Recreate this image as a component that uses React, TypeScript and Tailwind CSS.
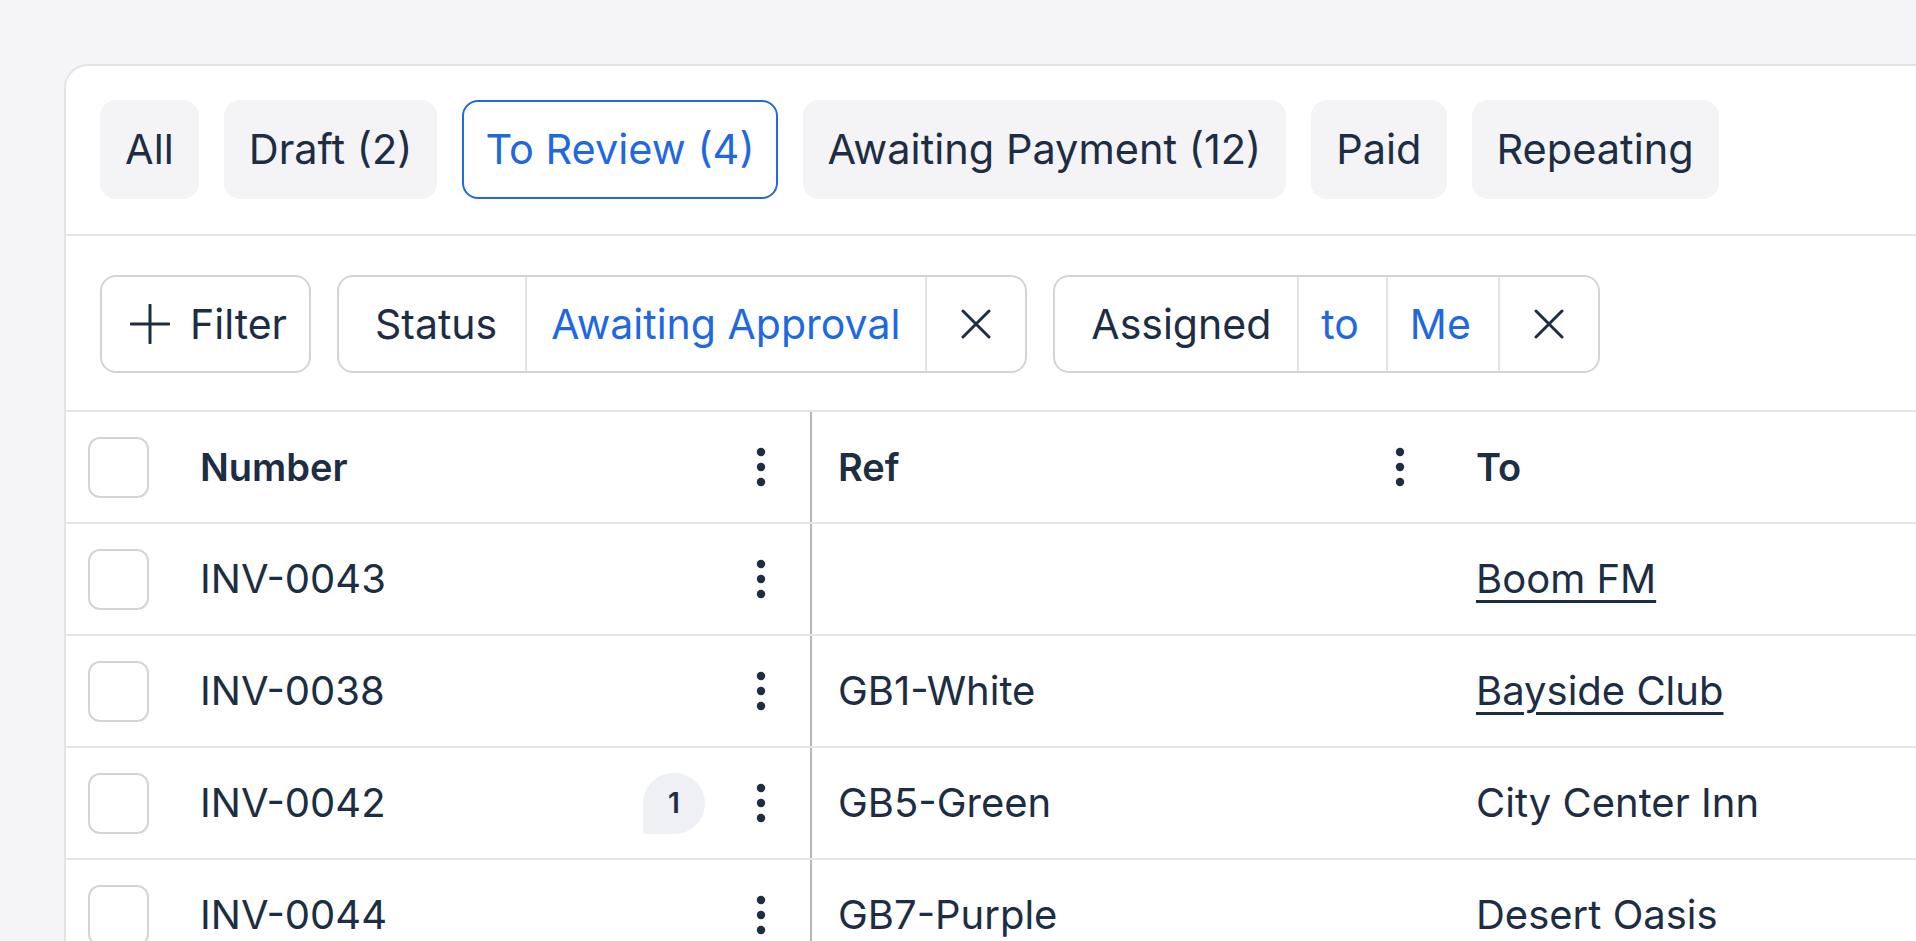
import React from 'react';

const tabs = [
  { label: 'All' },
  { label: 'Draft (2)' },
  { label: 'To Review (4)', active: true },
  { label: 'Awaiting Payment (12)' },
  { label: 'Paid' },
  { label: 'Repeating' },
];

const rows = [
  { number: 'INV-0043', ref: '', to: 'Boom FM', link: true },
  { number: 'INV-0038', ref: 'GB1-White', to: 'Bayside Club', link: true },
  { number: 'INV-0042', ref: 'GB5-Green', to: 'City Center Inn', badge: 1 },
  { number: 'INV-0044', ref: 'GB7-Purple', to: 'Desert Oasis' },
];

function Dots() {
  return (
    <svg width="24" height="40" viewBox="0 0 24 40" className="shrink-0 text-[#1d2d44]">
      <circle cx="12" cy="5" r="4.2" fill="currentColor" />
      <circle cx="12" cy="20" r="4.2" fill="currentColor" />
      <circle cx="12" cy="35" r="4.2" fill="currentColor" />
    </svg>
  );
}

function Cross() {
  return (
    <svg width="30" height="30" viewBox="0 0 30 30" className="text-[#1d2d44]">
      <path d="M2 2 L28 28 M28 2 L2 28" stroke="currentColor" strokeWidth="3" strokeLinecap="round" />
    </svg>
  );
}

function Checkbox() {
  return <div className="w-[61px] h-[61px] shrink-0 rounded-[12px] border-2 border-[#d4d4d8] bg-white" />;
}

export default function App() {
  return (
    <div className="h-[941px] overflow-hidden bg-[#f5f5f7] pt-[64px] pl-[64px] font-[Inter,sans-serif] text-[40px] leading-none text-[#1d2d44]">
      <div className="h-[1000px] bg-white border-l-2 border-t-2 border-[#e4e4e7] rounded-tl-[24px]">
        {/* Status tabs */}
        <div className="flex items-center gap-[25px] pl-[34px] pt-[34px] pb-[35px] border-b-2 border-[#e4e4e7] text-[41.5px]">
          {tabs.map((t) =>
            t.active ? (
              <div
                key={t.label}
                className="h-[99px] px-[21px] flex items-center rounded-[16px] border-2 border-[#2469de] bg-white text-[#1f69e0] whitespace-nowrap"
              >
                {t.label}
              </div>
            ) : (
              <div
                key={t.label}
                className="h-[99px] px-[25px] flex items-center rounded-[16px] bg-[#f4f4f6] whitespace-nowrap"
              >
                {t.label}
              </div>
            )
          )}
        </div>

        {/* Filters */}
        <div className="flex items-center gap-[26px] pl-[34px] pt-[39px] pb-[37px] border-b-2 border-[#e4e4e7] text-[41px]">
          <div className="h-[98px] flex items-center gap-[20px] pl-[28px] pr-[22px] rounded-[16px] border-2 border-[#d4d4d8]">
            <svg width="40" height="40" viewBox="0 0 40 40" className="text-[#1d2d44]">
              <path d="M20 1 V39 M1 20 H39" stroke="currentColor" strokeWidth="3" strokeLinecap="round" />
            </svg>
            <span>Filter</span>
          </div>

          <div className="h-[98px] flex items-stretch rounded-[16px] border-2 border-[#d4d4d8] whitespace-nowrap">
            <div className="flex items-center pl-[36px] pr-[28px] border-r-2 border-[#e4e4e7]">Status</div>
            <div className="flex items-center pl-[24px] pr-[25px] border-r-2 border-[#e4e4e7] text-[#1f69e0]">
              Awaiting Approval
            </div>
            <div className="flex items-center px-[34px]">
              <Cross />
            </div>
          </div>

          <div className="h-[98px] flex items-stretch rounded-[16px] border-2 border-[#d4d4d8] whitespace-nowrap">
            <div className="flex items-center pl-[36px] pr-[26px] border-r-2 border-[#e4e4e7]">Assigned</div>
            <div className="flex items-center pl-[22px] pr-[27px] border-r-2 border-[#e4e4e7] text-[#1f69e0]">to</div>
            <div className="flex items-center pl-[22px] pr-[27px] border-r-2 border-[#e4e4e7] text-[#1f69e0]">Me</div>
            <div className="flex items-center px-[34px]">
              <Cross />
            </div>
          </div>
        </div>

        {/* Table */}
        <div>
          <div className="flex h-[112px] border-b-2 border-[#e4e4e7] font-semibold text-[38px]">
            <div className="w-[746px] shrink-0 flex items-center pl-[22px] pr-[37px] border-r-2 border-[#b3b7be]">
              <Checkbox />
              <span className="ml-[51px] flex-1">Number</span>
              <Dots />
            </div>
            <div className="w-[637px] shrink-0 flex items-center pl-[26px] pr-[37px]">
              <span className="flex-1">Ref</span>
              <Dots />
            </div>
            <div className="flex-1 flex items-center pl-[27px]">To</div>
          </div>

          {rows.map((r) => (
            <div key={r.number} className="flex h-[112px] border-b-2 border-[#e4e4e7]">
              <div className="w-[746px] shrink-0 flex items-center pl-[22px] pr-[37px] border-r-2 border-[#b3b7be]">
                <Checkbox />
                <span className="ml-[51px] flex-1">{r.number}</span>
                {r.badge && (
                  <div className="w-[62px] h-[61px] mr-[44px] flex items-center justify-center rounded-[31px] rounded-bl-[4px] bg-[#eef0f3] text-[28px] font-semibold">
                    {r.badge}
                  </div>
                )}
                <Dots />
              </div>
              <div className="w-[637px] shrink-0 flex items-center pl-[26px] pr-[37px]">
                <span className="flex-1">{r.ref}</span>
              </div>
              <div className="flex-1 flex items-center pl-[27px] whitespace-nowrap">
                {r.link ? (
                  <span className="underline decoration-[3px] underline-offset-[7px]">{r.to}</span>
                ) : (
                  <span>{r.to}</span>
                )}
              </div>
            </div>
          ))}
        </div>
      </div>
    </div>
  );
}
